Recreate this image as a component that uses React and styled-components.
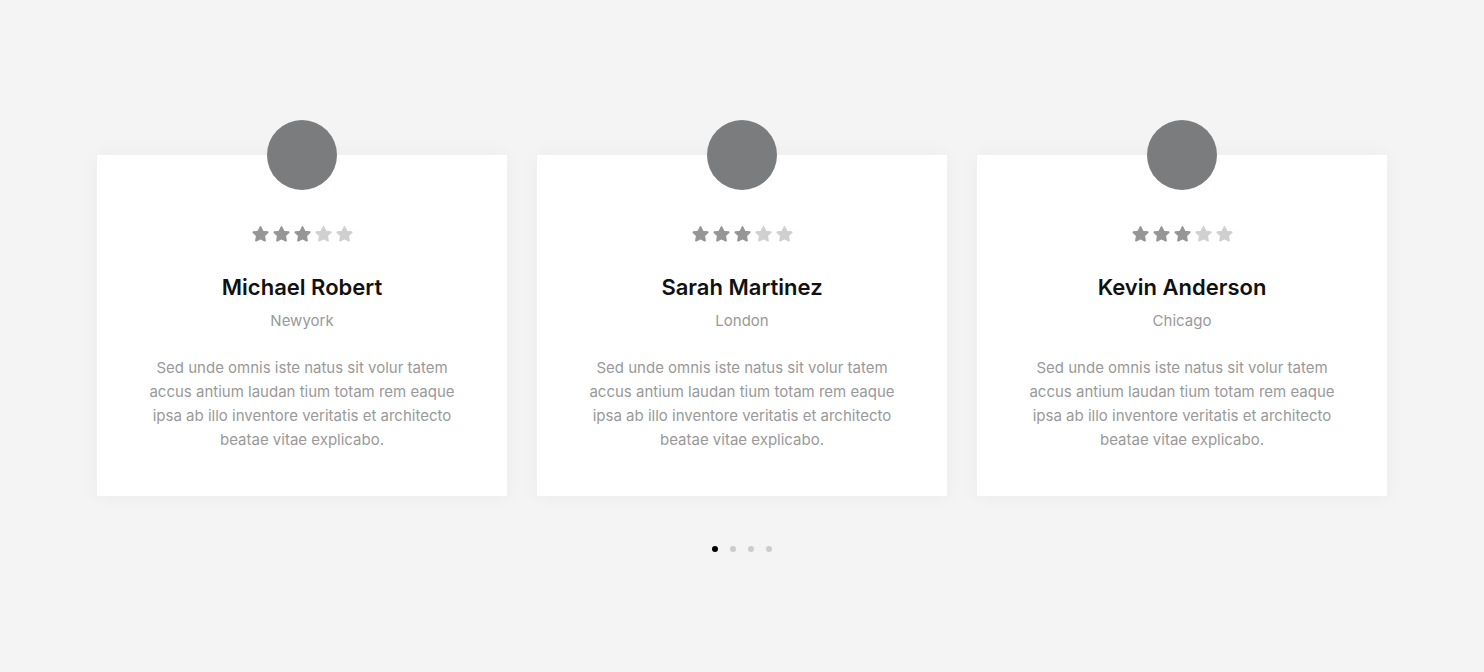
import styled, { createGlobalStyle } from 'styled-components';

const GlobalStyle = createGlobalStyle`
  body {
    margin: 0;
    background: #f4f4f4;
    font-family: Inter, "Noto Sans", sans-serif;
  }
`;

const reviews = [
  { name: 'Michael Robert', city: 'Newyork', rating: 3 },
  { name: 'Sarah Martinez', city: 'London', rating: 3 },
  { name: 'Kevin Anderson', city: 'Chicago', rating: 3 },
];

const quote =
  'Sed unde omnis iste natus sit volur tatem accus antium laudan tium totam rem eaque ipsa ab illo inventore veritatis et architecto beatae vitae explicabo.';

const Star = ({ filled }) => (
  <StarIcon viewBox="0 0 24 24" $filled={filled}>
    <path d="M12 2.6l2.8 5.7 6.2.9-4.5 4.3 1.1 6.2L12 16.8l-5.6 2.9 1.1-6.2L3 9.2l6.2-.9z" />
  </StarIcon>
);

const App = () => {
  return (
    <Page>
      <GlobalStyle />
      <Slider>
        {reviews.map((r) => (
          <Card key={r.name}>
            <Avatar />
            <Stars>
              {[0, 1, 2, 3, 4].map((i) => (
                <Star key={i} filled={i < r.rating} />
              ))}
            </Stars>
            <Name>{r.name}</Name>
            <City>{r.city}</City>
            <Quote>{quote}</Quote>
          </Card>
        ))}
      </Slider>
      <Dots>
        {[0, 1, 2, 3].map((i) => (
          <Dot key={i} $active={i === 0} />
        ))}
      </Dots>
    </Page>
  );
};

const Page = styled.div`
  width: 1484px;
  height: 672px;
  padding-top: 155px;
  box-sizing: border-box;
  display: flex;
  flex-direction: column;
  align-items: center;
`;

const Slider = styled.div`
  display: flex;
  gap: 30px;
`;

const Card = styled.div`
  width: 410px;
  height: 341px;
  box-sizing: border-box;
  background: #fff;
  box-shadow: 0 0 20px rgba(0, 0, 0, 0.04);
  display: flex;
  flex-direction: column;
  align-items: center;
`;

const Avatar = styled.div`
  width: 70px;
  height: 70px;
  border-radius: 50%;
  background: #7b7c7d;
  margin-top: -35px;
`;

const Stars = styled.div`
  display: flex;
  gap: 2px;
  margin-top: 35px;
`;

const StarIcon = styled.svg`
  width: 19px;
  height: 19px;
  fill: ${({ $filled }) => ($filled ? '#969696' : '#d0d0d0')};
  stroke: ${({ $filled }) => ($filled ? '#969696' : '#d0d0d0')};
  stroke-width: 2.4;
  stroke-linejoin: round;
`;

const Name = styled.h3`
  margin: 28px 0 0;
  font-size: 22px;
  line-height: 30px;
  font-weight: 600;
  color: #111;
`;

const City = styled.div`
  margin-top: 7px;
  font-size: 15px;
  line-height: 24px;
  color: #999;
`;

const Quote = styled.p`
  margin: 23px 0 0;
  width: 320px;
  text-align: center;
  font-size: 15px;
  line-height: 24px;
  color: #999;
`;

const Dots = styled.div`
  display: flex;
  gap: 12px;
  margin-top: 50px;
`;

const Dot = styled.span`
  width: 6px;
  height: 6px;
  border-radius: 50%;
  background: ${({ $active }) => ($active ? '#000' : '#ccc')};
`;

export default App;
